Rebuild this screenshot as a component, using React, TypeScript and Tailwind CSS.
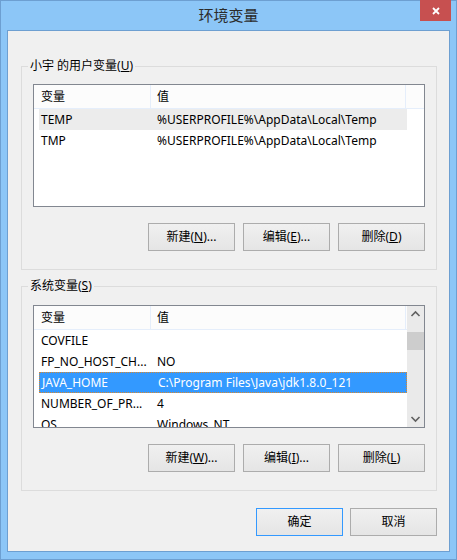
import React from "react";

const ui = "font-['Noto_Sans','Noto_Sans_CJK_SC',sans-serif]";

type Row = { name: string; value: string; state?: "gray" | "sel" };

const userVars: Row[] = [
  { name: "TEMP", value: "%USERPROFILE%\\AppData\\Local\\Temp", state: "gray" },
  { name: "TMP", value: "%USERPROFILE%\\AppData\\Local\\Temp" },
];

const sysVars: Row[] = [
  { name: "COVFILE", value: "" },
  { name: "FP_NO_HOST_CH...", value: "NO" },
  { name: "JAVA_HOME", value: "C:\\Program Files\\Java\\jdk1.8.0_121", state: "sel" },
  { name: "NUMBER_OF_PR...", value: "4" },
  { name: "OS", value: "Windows_NT" },
];

const Btn = ({ children, primary }: { children: React.ReactNode; primary?: boolean }) => (
  <div
    className={
      primary
        ? "w-[87px] h-[28px] flex items-center justify-center border border-[#3399ff] bg-linear-to-b from-[#f0f0f0] to-[#e5e5e5] text-[12px] text-black"
        : "w-[87px] h-[28px] flex items-center justify-center border border-[#acacac] bg-linear-to-b from-[#f0f0f0] to-[#e5e5e5] text-[12px] text-black"
    }
  >
    {children}
  </div>
);

const Header = () => (
  <div className="h-[24px] flex bg-[#fcfcfc] border-b border-b-[#e5eefb] text-[12px] text-black shrink-0">
    <div className="w-[117px] border-r border-r-[#e5eefb] pl-[7px] flex items-center">变量</div>
    <div className="w-[255px] border-r border-r-[#e5eefb] pl-[6px] flex items-center">值</div>
  </div>
);

const ListRow = ({ row }: { row: Row }) => {
  let cls = "ml-[5px] w-[368px] h-[21px] flex items-center text-[12px] text-black shrink-0";
  if (row.state === "gray") cls = "ml-[5px] w-[368px] h-[21px] flex items-center text-[12px] text-black bg-[#ececec] shrink-0";
  if (row.state === "sel")
    cls = "ml-[5px] w-[368px] h-[21px] flex items-center text-[12px] text-white bg-[#3399ff] border border-dotted border-[#d9882e] shrink-0";
  return (
    <div className={cls}>
      <div className="w-[112px] pl-[2px] whitespace-nowrap overflow-hidden">{row.name}</div>
      <div className="pl-[6px] whitespace-nowrap">{row.value}</div>
    </div>
  );
};

const Chevron = ({ down }: { down?: boolean }) => (
  <svg width="17" height="17" viewBox="0 0 17 17">
    <path
      d={down ? "M4.5 7 L8.5 11 L12.5 7" : "M4.5 10 L8.5 6 L12.5 10"}
      fill="none"
      stroke="#606060"
      strokeWidth="1.6"
    />
  </svg>
);

const Group = ({
  label,
  children,
  extraTop,
}: {
  label: React.ReactNode;
  children: React.ReactNode;
  extraTop?: boolean;
}) => (
  <div
    className={
      extraTop
        ? "relative border border-[#dcdcdc] pt-[18px] pb-[18px] px-[11px] flex flex-col"
        : "relative border border-[#dcdcdc] pt-[17px] pb-[18px] px-[11px] flex flex-col"
    }
  >
    <span className="absolute left-[6px] top-[-9px] px-[2px] bg-[#f0f0f0] text-[12px] leading-[16px] text-black">
      {label}
    </span>
    {children}
  </div>
);

export default function App() {
  return (
    <div className={`w-[457px] h-[560px] bg-[#8cc6f7] border border-[#6d9fd1] flex flex-col relative ${ui}`}>
      <div className="h-[29px] flex items-center justify-center text-[15px] text-[#2b2b2b] pb-[1px]">环境变量</div>
      <div className="absolute top-[-1px] right-[5px] w-[31px] h-[21px] bg-[#c75050] flex items-center justify-center">
        <svg width="8" height="8" viewBox="0 0 8 8">
          <path d="M1 1 L7 7 M7 1 L1 7" stroke="#ffffff" strokeWidth="1.8" />
        </svg>
      </div>

      <div className="mx-[6px] h-[522px] border border-[#6d9fd1] bg-[#f0f0f0] flex flex-col pt-[35px] pl-[13px] pr-[12px]">
        <Group
          label={
            <>
              小宇 的用户变量(<u>U</u>)
            </>
          }
        >
          <div className="h-[123px] border border-[#828790] bg-white flex flex-col">
            <div className="flex">
              <Header />
              <div className="flex-1 h-[24px] bg-[#fcfcfc] border-b border-b-[#e5eefb]" />
            </div>
            {userVars.map((r) => (
              <ListRow key={r.name} row={r} />
            ))}
          </div>
          <div className="mt-[16px] flex justify-end gap-[8px]">
            <Btn>
              新建(<u>N</u>)...
            </Btn>
            <Btn>
              编辑(<u>E</u>)...
            </Btn>
            <Btn>
              删除(<u>D</u>)
            </Btn>
          </div>
        </Group>

        <div className="mt-[16px]">
          <Group
            extraTop
            label={
              <>
                系统变量(<u>S</u>)
              </>
            }
          >
            <div className="h-[123px] border border-[#828790] bg-white flex">
              <div className="w-[373px] flex flex-col overflow-hidden">
                <Header />
                {sysVars.map((r) => (
                  <ListRow key={r.name} row={r} />
                ))}
              </div>
              <div className="w-[17px] bg-[#eaeaea] flex flex-col">
                <div className="h-[17px] flex items-center justify-center">
                  <Chevron />
                </div>
                <div className="flex-1 flex flex-col">
                  <div className="mt-[9px] h-[18px] bg-[#cdcdcd]" />
                </div>
                <div className="h-[17px] flex items-center justify-center">
                  <Chevron down />
                </div>
              </div>
            </div>
            <div className="mt-[16px] flex justify-end gap-[8px]">
              <Btn>
                新建(<u>W</u>)...
              </Btn>
              <Btn>
                编辑(<u>I</u>)...
              </Btn>
              <Btn>
                删除(<u>L</u>)
              </Btn>
            </div>
          </Group>
        </div>

        <div className="mt-[17px] flex justify-end gap-[7px]">
          <Btn primary>确定</Btn>
          <Btn>取消</Btn>
        </div>
      </div>
    </div>
  );
}
